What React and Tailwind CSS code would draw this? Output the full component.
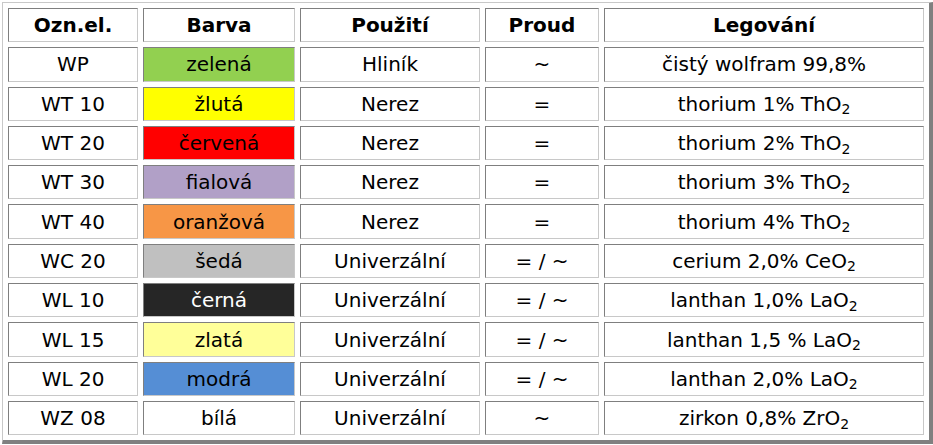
const rows = [
  { code: 'WP', color: 'zelená', bg: 'bg-[#92d050]', use: 'Hliník', cur: '~', alloy: ['čistý wolfram 99,8%'] },
  { code: 'WT 10', color: 'žlutá', bg: 'bg-[#ffff00]', use: 'Nerez', cur: '=', alloy: ['thorium 1% ThO', '2'] },
  { code: 'WT 20', color: 'červená', bg: 'bg-[#ff0000]', use: 'Nerez', cur: '=', alloy: ['thorium 2% ThO', '2'] },
  { code: 'WT 30', color: 'fialová', bg: 'bg-[#b1a0c7]', use: 'Nerez', cur: '=', alloy: ['thorium 3% ThO', '2'] },
  { code: 'WT 40', color: 'oranžová', bg: 'bg-[#f79646]', use: 'Nerez', cur: '=', alloy: ['thorium 4% ThO', '2'] },
  { code: 'WC 20', color: 'šedá', bg: 'bg-[#c0c0c0]', use: 'Univerzální', cur: '= / ~', alloy: ['cerium 2,0% CeO', '2'] },
  { code: 'WL 10', color: 'černá', bg: 'bg-[#262626] text-white', use: 'Univerzální', cur: '= / ~', alloy: ['lanthan 1,0% LaO', '2'] },
  { code: 'WL 15', color: 'zlatá', bg: 'bg-[#ffff99]', use: 'Univerzální', cur: '= / ~', alloy: ['lanthan 1,5 % LaO', '2'] },
  { code: 'WL 20', color: 'modrá', bg: 'bg-[#558ed5]', use: 'Univerzální', cur: '= / ~', alloy: ['lanthan 2,0% LaO', '2'] },
  { code: 'WZ 08', color: 'bílá', bg: 'bg-white', use: 'Univerzální', cur: '~', alloy: ['zirkon 0,8% ZrO', '2'] },
]

const cell =
  'h-[34.3px] p-0 text-center align-middle border border-t-[#7f7f7f] border-l-[#7f7f7f] border-b-[#c8c8c8] border-r-[#c8c8c8]'

export default function App() {
  return (
    <div className="bg-white pl-[2px] pt-[2px] w-[933px] h-[445px] font-['DejaVu_Sans',Verdana,sans-serif] text-[20px] leading-none text-black">
      <table className="w-[931px] table-fixed border-separate border-spacing-[5px] border-t border-l border-t-[#c8c8c8] border-l-[#c8c8c8] border-r-4 border-b-4 border-r-[#808080] border-b-[#808080]">
        <colgroup>
          <col className="w-[130px]" />
          <col className="w-[152px]" />
          <col className="w-[180px]" />
          <col className="w-[114px]" />
          <col />
        </colgroup>
        <thead>
          <tr>
            {['Ozn.el.', 'Barva', 'Použití', 'Proud', 'Legování'].map((h) => (
              <th key={h} className={`${cell} font-bold`}>
                {h}
              </th>
            ))}
          </tr>
        </thead>
        <tbody>
          {rows.map((r) => (
            <tr key={r.code}>
              <td className={cell}>{r.code}</td>
              <td className={`${cell} ${r.bg}`}>{r.color}</td>
              <td className={cell}>{r.use}</td>
              <td className={cell}>{r.cur}</td>
              <td className={cell}>
                {r.alloy[0]}
                {r.alloy[1] && <sub className="text-[14px]">{r.alloy[1]}</sub>}
              </td>
            </tr>
          ))}
        </tbody>
      </table>
    </div>
  )
}
